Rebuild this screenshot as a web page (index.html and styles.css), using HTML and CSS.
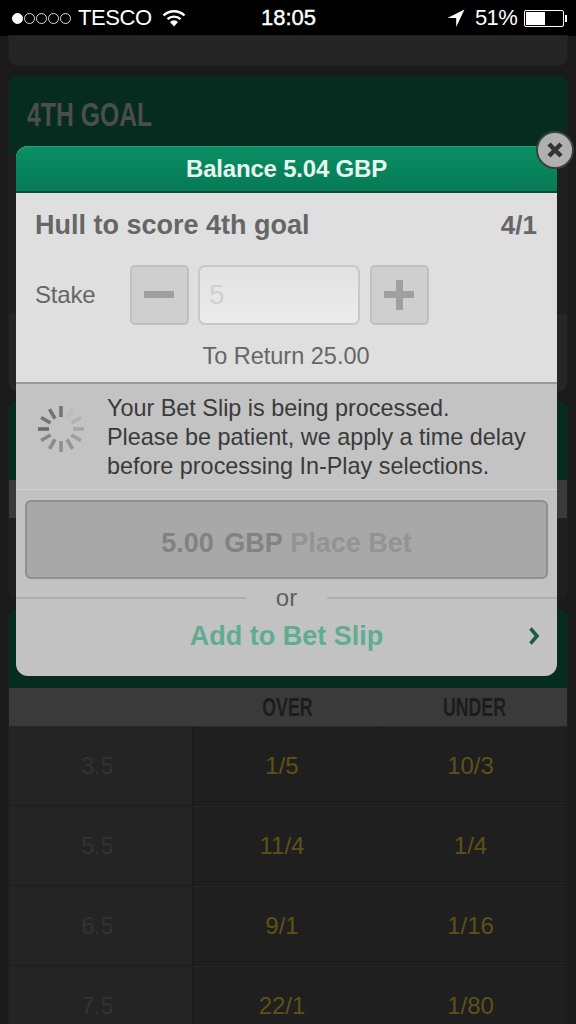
FILE: index.html
```html
<!DOCTYPE html>
<html lang="en">
<head>
  <meta charset="UTF-8" />
  <title>Bet Slip</title>
  <link rel="stylesheet" href="styles.css">
</head>
<body>
  <!-- Status bar -->
  <div class="status">
    <div class="status-left">
      <span class="dots"><i class="on"></i><i></i><i></i><i></i><i></i></span>
      <span class="carrier">TESCO</span>
      <svg class="wifi" width="24" height="18" viewBox="0 0 24 18">
        <path d="M1.5 6.5a15 15 0 0 1 21 0" fill="none" stroke="#fff" stroke-width="2.4"/>
        <path d="M5.5 10.2a9.5 9.5 0 0 1 13 0" fill="none" stroke="#fff" stroke-width="2.4"/>
        <path d="M12 17.5l-4-4.6a5.6 5.6 0 0 1 8 0z" fill="#fff"/>
      </svg>
    </div>
    <div class="status-time">18:05</div>
    <div class="status-right">
      <svg class="arrow" width="18" height="18" viewBox="0 0 18 18"><path d="M17.5 0.5L0.5 9H9.2V18z" fill="#fff"/></svg>
      <span class="percent">51%</span>
      <span class="battery"><span class="battery-level"></span></span>
    </div>
  </div>

  <div class="page">
    <div class="card card-top"></div>

    <div class="card">
      <div class="market-head"><h2>4TH GOAL</h2></div>
      <div class="market-rows">
        <div class="row-dark"></div>
        <div class="row-light"></div>
      </div>
    </div>

    <div class="card">
      <div class="market-head"></div>
      <div class="thead"></div>
      <div class="row-short"></div>
    </div>

    <div class="card card-last">
      <div class="market-head"></div>
      <div class="thead odds-row">
        <div></div>
        <div><span class="narrow">OVER</span></div>
        <div><span class="narrow">UNDER</span></div>
      </div>
      <div class="odds-row line"><div class="handicap">3.5</div><div class="price">1/5</div><div class="price">10/3</div></div>
      <div class="odds-row line"><div class="handicap">5.5</div><div class="price">11/4</div><div class="price">1/4</div></div>
      <div class="odds-row line"><div class="handicap">6.5</div><div class="price">9/1</div><div class="price">1/16</div></div>
      <div class="odds-row line"><div class="handicap">7.5</div><div class="price">22/1</div><div class="price">1/80</div></div>
    </div>
  </div>

  <!-- Bet slip popup -->
  <div class="modal">
    <div class="modal-head">Balance 5.04 GBP</div>
    <div class="close">
      <svg width="20" height="20" viewBox="0 0 20 20"><path d="M4 4l12 12M16 4L4 16" stroke="#333" stroke-width="4.5"/></svg>
    </div>

    <div class="slip">
      <div class="slip-title"><span>Hull to score 4th goal</span><span class="slip-odds">4/1</span></div>
      <div class="stake">
        <span class="stake-label">Stake</span>
        <div class="step"><span class="minus"></span></div>
        <div class="stake-input">5</div>
        <div class="step"><span class="plus"></span></div>
      </div>
      <div class="to-return">To Return 25.00</div>
    </div>

    <div class="processing">
      <svg class="spinner" width="48" height="48" viewBox="-24 -24 48 48">
        <g stroke="#666" stroke-width="3.6">
          <line y1="-23" y2="-12" opacity="0.85" />
          <line y1="-23" y2="-12" opacity="0.08" transform="rotate(30)" />
          <line y1="-23" y2="-12" opacity="0.2" transform="rotate(60)" />
          <line y1="-23" y2="-12" opacity="0.3" transform="rotate(90)" />
          <line y1="-23" y2="-12" opacity="0.4" transform="rotate(120)" />
          <line y1="-23" y2="-12" opacity="0.5" transform="rotate(150)" />
          <line y1="-23" y2="-12" opacity="0.55" transform="rotate(180)" />
          <line y1="-23" y2="-12" opacity="0.6" transform="rotate(210)" />
          <line y1="-23" y2="-12" opacity="0.65" transform="rotate(240)" />
          <line y1="-23" y2="-12" opacity="0.95" transform="rotate(270)" />
          <line y1="-23" y2="-12" opacity="0.85" transform="rotate(300)" />
          <line y1="-23" y2="-12" opacity="0.85" transform="rotate(330)" />
        </g>
      </svg>
      <p>Your Bet Slip is being processed.<br>Please be patient, we apply a time delay<br>before processing In-Play selections.</p>
    </div>

    <div class="actions">
      <div class="place-bet"><span class="amount">5.00 GBP</span> <span class="place-label">Place Bet</span></div>
      <div class="or"><span>or</span></div>
      <div class="add-slip">
        <span>Add to Bet Slip</span>
        <svg class="chevron" width="12" height="20" viewBox="0 0 12 20"><path d="M2.5 2.5l6.5 7.5-6.5 7.5" fill="none" stroke="#1c5c48" stroke-width="3.6"/></svg>
      </div>
    </div>
  </div>
</body>
</html>
```

FILE: styles.css
```css
* {
  box-sizing: border-box;
}

body {
  margin: 0;
  width: 576px;
  height: 1024px;
  overflow: hidden;
  position: relative;
  background: #1a1a1a;
  font-family: "Liberation Sans", Arial, sans-serif;
}

.status {
  height: 36px;
  background: #000;
  color: #fff;
  font-size: 22px;
  display: grid;
  grid-template-columns: 1fr auto 1fr;
  align-items: center;
  padding: 0 11px 0 12px;
}

.status-left {
  display: flex;
  align-items: center;
}

.dots {
  display: flex;
  gap: 1px;
  margin-right: 7px;
}

.dots i {
  width: 11px;
  height: 11px;
  border: 1px solid #ddd;
  border-radius: 50%;
}

.dots i.on {
  background: #fff;
  border-color: #fff;
}

.carrier {
  letter-spacing: -0.4px;
}

.wifi {
  margin-left: 10px;
}

.status-time {
  -webkit-text-stroke: 0.4px #fff;
}

.status-right {
  display: flex;
  align-items: center;
  justify-content: flex-end;
}

.arrow {
  margin-right: 10px;
}

.percent {
  letter-spacing: -0.7px;
  margin-right: 7px;
}

.battery {
  position: relative;
  width: 40px;
  height: 17px;
  margin-right: 1px;
  border: 1px solid #fff;
  border-radius: 2px;
  padding: 1px;
  display: block;
}

.battery:after {
  content: "";
  position: absolute;
  right: -4px;
  top: 4px;
  width: 2px;
  height: 7px;
  background: #fff;
}

.battery-level {
  display: block;
  width: 19px;
  height: 13px;
  background: #fff;
}

.page {
  padding: 0 9px;
}

.card {
  background: #222;
  border-radius: 8px;
  margin-bottom: 11px;
  overflow: hidden;
  box-shadow: 0 0 0 1px #1e1e1e;
}

.card-top {
  height: 29px;
  border-radius: 0 0 8px 8px;
  background: #252525;
}

.market-head {
  height: 78px;
  background: #062c20;
  padding: 21px 18px 0;
}

.market-head h2 {
  margin: 0;
  font-size: 33px;
  line-height: 36px;
  font-weight: 700;
  color: #4b4e4c;
  transform: scaleX(0.75);
  transform-origin: left center;
  white-space: nowrap;
}

.market-rows {
  height: 237px;
}

.row-dark {
  height: 160px;
  background: #1f1f1f;
}

.row-light {
  height: 77px;
  background: #262626;
}

.thead {
  height: 38px;
  background: #3a3a3a;
}

.row-short {
  height: 81px;
  background: #1f1f1f;
}

.odds-row {
  display: grid;
  grid-template-columns: 184px 185px 1fr;
  align-items: center;
  text-align: center;
}

.thead.odds-row {
  font-size: 25px;
  font-weight: 700;
  color: #1c1c1c;
}

.narrow {
  display: inline-block;
  transform: scaleX(0.71);
}

.thead.odds-row div:nth-child(2) {
  padding-left: 4px;
}

.thead.odds-row div:nth-child(3) {
  padding-left: 3px;
}

.line {
  height: 80px;
  font-size: 24px;
  border-bottom: 1px solid #1a1a1a;
  background: #222;
}

.line > div {
  height: 100%;
  display: flex;
  align-items: center;
  justify-content: center;
  border-top: 1px solid #272727;
}

.handicap {
  background: #242424;
  color: #333;
  border-right: 1px solid #1a1a1a;
  padding-right: 6px;
  font-size: 23px;
}

.price {
  color: #5c5217;
  background: #1f1f1f;
  border-right: 1px solid #1c1c1c;
  padding-right: 6px;
}

.price:last-child {
  padding-right: 3px;
}

/* popup */
.modal {
  position: absolute;
  left: 16px;
  top: 146px;
  width: 541px;
  height: 530px;
  border-radius: 12px;
  background: #c2c2c2;
  display: flex;
  flex-direction: column;
}

.modal-head {
  height: 47px;
  flex: none;
  background: linear-gradient(#0a8f65, #067a55);
  border-top: 1px solid #2a9c78;
  border-bottom: 2px solid #0c4a38;
  border-radius: 12px 12px 0 0;
  color: #e6f5ee;
  font-size: 24px;
  letter-spacing: -0.2px;
  font-weight: 700;
  text-align: center;
  line-height: 43px;
}

.close {
  position: absolute;
  right: -17px;
  top: -15px;
  width: 38px;
  height: 38px;
  border-radius: 50%;
  background: #b0b0b0;
  border: 2px solid #3e3e3e;
  display: flex;
  align-items: center;
  justify-content: center;
}

.slip {
  height: 191px;
  flex: none;
  background: #dfdfdf;
  padding: 17px 20px 0 19px;
  color: #666;
  border-bottom: 2px solid #999;
}

.slip-title {
  display: flex;
  justify-content: space-between;
  font-size: 27px;
  font-weight: 700;
  line-height: 30px;
}

.slip-odds {
  font-size: 26px;
}

.stake {
  display: flex;
  align-items: center;
  margin-top: 25px;
  height: 59px;
}

.stake-label {
  width: 95px;
  font-size: 24px;
  letter-spacing: -0.2px;
}

.step {
  width: 59px;
  height: 60px;
  background: #cfcfcf;
  border: 2px solid #c0c0c0;
  border-radius: 5px;
  display: flex;
  align-items: center;
  justify-content: center;
}

.minus {
  width: 30px;
  height: 7px;
  margin-left: -1px;
  background: #a0a0a0;
}

.plus {
  width: 30px;
  height: 30px;
  margin-left: -1px;
  background:
    linear-gradient(#a0a0a0, #a0a0a0) center / 100% 7px no-repeat,
    linear-gradient(#a0a0a0, #a0a0a0) center / 7px 100% no-repeat;
}

.stake-input {
  width: 162px;
  height: 60px;
  margin: 0 10px 0 9px;
  border: 2px solid #c8c8c8;
  border-radius: 7px;
  background: linear-gradient(#e2e2e2, #ececec);
  color: #d0d0d0;
  font-size: 28px;
  line-height: 56px;
  padding-left: 9px;
}

.to-return {
  margin-top: 17px;
  text-align: center;
  font-size: 23.5px;
  line-height: 30px;
}

.processing {
  height: 106px;
  flex: none;
  display: flex;
  align-items: flex-start;
  background: #c3c3c3;
  border-bottom: 1px solid #d2d2d2;
  color: #3a3a3a;
  padding: 10px 0 0 21px;
}

.spinner {
  margin: 11px 22px 0 0;
  flex: none;
}

.processing p {
  margin: 0;
  font-size: 23.4px;
  line-height: 29px;
}

.actions {
  flex: 1;
  padding: 10px 9px 0;
}

.place-bet {
  height: 79px;
  border: 2px solid #8f8f8f;
  border-radius: 6px;
  background: #a8a8a8;
  text-align: center;
  font-size: 27px;
  font-weight: 700;
  line-height: 82px;
}

.amount {
  color: #828282;
  word-spacing: 3px;
}

.place-label {
  color: #939393;
}

.or {
  display: flex;
  align-items: center;
  justify-content: center;
  gap: 30px;
  height: 38px;
  margin: 0 -9px;
  color: #5e5e5e;
  font-size: 24px;
}

.or:before,
.or:after {
  content: "";
  flex: 1;
  height: 2px;
  background: #aeaeae;
}

.add-slip {
  position: relative;
  text-align: center;
  font-size: 27px;
  font-weight: 700;
  line-height: 38px;
  color: #5fac92;
}

.chevron {
  position: absolute;
  right: 8px;
  top: 9px;
}
```
